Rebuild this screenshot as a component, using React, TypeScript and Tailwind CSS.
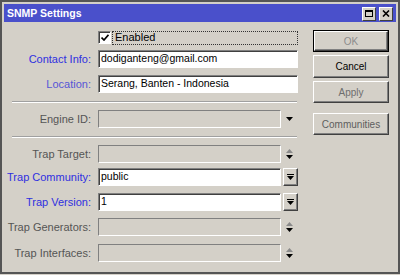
import React from "react";

const font = { fontFamily: '"Liberation Sans", Arial, sans-serif' };

const Down: React.FC<{ color?: string }> = ({ color = "#000" }) => (
    <svg width="7" height="4" viewBox="0 0 7 4">
        <path d="M0 0h7L3.5 4z" fill={color} />
    </svg>
);

const Up: React.FC<{ color?: string }> = ({ color = "#000" }) => (
    <svg width="7" height="4" viewBox="0 0 7 4">
        <path d="M0 4h7L3.5 0z" fill={color} />
    </svg>
);

const Spinner: React.FC = () => (
    <div className="w-[17px] flex flex-col items-center justify-center gap-[2px]">
        <Up color="#8a8a8a" />
        <Down />
    </div>
);

const DropArrow: React.FC = () => (
    <div className="w-[17px] flex items-center justify-center">
        <Down />
    </div>
);

const DropButton: React.FC = () => (
    <div className="ml-[2px] w-[15px] h-[18px] flex flex-col items-center justify-center gap-[1px] bg-[#d4d0c8] border border-t-white border-l-white border-b-[#404040] border-r-[#404040] shadow-[inset_-1px_-1px_0_#808080]">
        <div className="w-[7px] h-[1px] bg-black" />
        <Down />
    </div>
);

type FieldProps = {
    label: string;
    active?: boolean;
    value?: string;
    side?: "drop" | "spin" | "button" | "none";
    className?: string;
    labelColor?: string;
};

const Field: React.FC<FieldProps> = ({ label, active, value, side = "none", className = "", labelColor }) => (
    <div className={`flex items-center h-[18px] ${className}`}>
        <div
            className="w-[87px] text-right text-[11px] leading-none"
            style={{ color: labelColor ?? (active ? "#2f2fe0" : "#555555") }}
        >
            {label}
        </div>
        <div className="w-[7px]" />
        <div
            className={`h-[18px] border border-t-[#808080] border-l-[#808080] border-b-white border-r-white flex items-center px-[2px] text-[10.5px] text-black ${
                active ? "bg-white shadow-[inset_1px_1px_0_#404040]" : "bg-[#d4d0c8]"
            } ${side === "none" ? "w-[200px]" : "w-[183px]"}`}
        >
            {value}
        </div>
        {side === "drop" && <DropArrow />}
        {side === "spin" && <Spinner />}
        {side === "button" && <DropButton />}
    </div>
);

const Separator: React.FC<{ className?: string }> = ({ className = "" }) => (
    <div className={`ml-[8px] w-[285px] h-[2px] border-t border-t-[#a0a0a0] border-b border-b-white ${className}`} />
);

const Btn: React.FC<{ label: string; color: string; def?: boolean; className?: string }> = ({ label, color, def, className = "" }) => (
    <div className={`w-[76px] h-[22px] ${def ? "border border-black" : ""} ${className}`}>
        <div
            className="w-full h-full flex items-center justify-center text-[10px] border border-t-white border-l-white border-b-[#404040] border-r-[#404040] shadow-[inset_-1px_-1px_0_#808080]"
            style={{ color }}
        >
            {label}
        </div>
    </div>
);

const App: React.FC = () => {
    return (
        <div className="w-[400px] h-[275px] bg-[#d4d0c8]" style={font}>
            <div className="w-[400px] h-[274px] border-2 border-[#555555] p-[2px] flex flex-col">
                {/* Title bar */}
                <div className="h-[18px] bg-[#4a50cb] flex items-center pl-[3px] pr-[3px]">
                    <span className="text-white font-bold text-[10.5px] leading-none">SNMP Settings</span>
                    <div className="ml-auto flex gap-[3px] mt-[1px]">
                        <div className="w-[14px] h-[14px] bg-[#d4d0c8] border border-t-white border-l-white border-b-[#404040] border-r-[#404040] flex items-center justify-center">
                            <div className="w-[8px] h-[7px] border border-black border-t-2" />
                        </div>
                        <div className="w-[14px] h-[14px] bg-[#d4d0c8] border border-t-white border-l-white border-b-[#404040] border-r-[#404040] flex items-center justify-center">
                            <svg width="8" height="7" viewBox="0 0 8 7">
                                <path d="M1 0.5L7 6.5M7 0.5L1 6.5" stroke="#000" strokeWidth="1.6" />
                            </svg>
                        </div>
                    </div>
                </div>

                {/* Body */}
                <div className="flex flex-1">
                    <div className="w-[307px] flex flex-col pt-[9px]">
                        <div className="flex items-center h-[13px]">
                            <div className="w-[94px]" />
                            <div className="w-[13px] h-[13px] bg-white border border-t-[#808080] border-l-[#808080] border-b-white border-r-white shadow-[inset_1px_1px_0_#404040] flex items-center justify-center">
                                <svg width="8" height="7" viewBox="0 0 8 7">
                                    <path d="M0.5 3.5L3 6L7.5 0.8" stroke="#000" strokeWidth="1.7" fill="none" />
                                </svg>
                            </div>
                            <div className="ml-[1px] w-[186px] h-[14px] border border-dotted border-[#333] flex items-center pl-[2px] text-[11px] text-black leading-none">
                                Enabled
                            </div>
                        </div>
                        <Field label="Contact Info:" active value="dodiganteng@gmail.com" className="mt-[6px]" />
                        <Field label="Location:" active value="Serang, Banten - Indonesia" className="mt-[7px]" labelColor="#5656d6" />
                        <Separator className="mt-[8px]" />
                        <Field label="Engine ID:" side="drop" className="mt-[7px]" />
                        <Separator className="mt-[8px]" />
                        <Field label="Trap Target:" side="spin" className="mt-[7px]" />
                        <Field label="Trap Community:" active value="public" side="button" className="mt-[5px]" />
                        <Field label="Trap Version:" active value="1" side="button" className="mt-[7px]" />
                        <Field label="Trap Generators:" side="spin" className="mt-[7px]" />
                        <Field label="Trap Interfaces:" side="spin" className="mt-[8px]" />
                    </div>
                    <div className="flex flex-col pt-[8px] ml-[2px]">
                        <Btn label="OK" color="#8c8c8c" def />
                        <Btn label="Cancel" color="#000000" className="mt-[3px] h-[23px]" />
                        <Btn label="Apply" color="#6e6e6e" className="mt-[3px]" />
                        <Btn label="Communities" color="#5e5e5e" className="mt-[10px]" />
                    </div>
                </div>
            </div>
        </div>
    );
};

export default App;
